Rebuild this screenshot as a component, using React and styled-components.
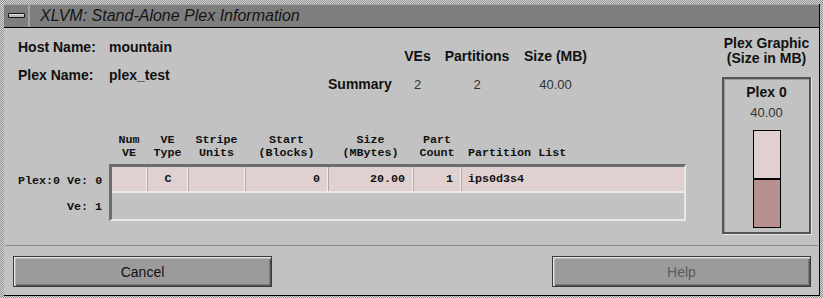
import React from "react";
import styled, { createGlobalStyle } from "styled-components";

const GlobalStyle = createGlobalStyle`
  html, body {
    margin: 0;
    padding: 0;
    background: #b4b4b4;
  }
  body {
    font-family: "Liberation Sans", Arial, sans-serif;
  }
`;

const PINK = "#e0d0d0";
const DARK_PINK = "#b89090";
const PANEL = "#c2c2c2";

// column widths of the VE table (cell + its seam)
const COLS = [36, 41, 57, 83, 85, 48, 222];

const Frame = styled.div`
  box-sizing: border-box;
  width: 823px;
  height: 298px;
  padding: 4px 3px 2px 4px;
  background: repeating-conic-gradient(#d8d8d8 0 25%, #8e8e8e 0 50%) 0 0 / 2px 2px;
`;

const Window = styled.div`
  box-sizing: border-box;
  height: 100%;
  display: flex;
  flex-direction: column;
  background: ${PANEL};
  border-right: 1px solid #000;
  border-bottom: 1px solid #000;
`;

const TitleBar = styled.div`
  height: 23px;
  flex: none;
  display: flex;
  align-items: center;
  background: #7e7e7e;
  border-bottom: 1px solid #000;
  box-shadow: inset 0 1px 0 #a6a6a6;
`;

const MenuButton = styled.div`
  width: 24px;
  height: 100%;
  display: flex;
  align-items: center;
  justify-content: center;
  border-right: 2px solid #a4a4a4;
`;

const MenuBar = styled.div`
  width: 15px;
  height: 3px;
  border: 1px solid #111;
  border-radius: 1px;
  background: #b8b8b8;
  box-shadow: inset 0 1px 0 #e0e0e0;
`;

const Title = styled.div`
  margin-left: 10px;
  font-size: 16px;
  font-style: italic;
  color: #151515;
  white-space: nowrap;
`;

const Upper = styled.div`
  box-sizing: border-box;
  height: 217px;
  flex: none;
  display: flex;
  padding: 5px 8px 0 14px;
`;

const MainColumn = styled.div`
  flex: 1;
`;

const InfoRow = styled.div`
  display: flex;
`;

const InfoGrid = styled.div`
  width: 310px;
  display: grid;
  grid-template-columns: 91px auto;
  grid-auto-rows: 28px;
  align-items: center;
  font-size: 14px;
  font-weight: bold;
  color: #111;
`;

const SummaryGrid = styled.div`
  margin-top: 9px;
  display: grid;
  grid-template-columns: 64px 25px 68px 63px;
  column-gap: 13px;
  grid-auto-rows: 28px;
  align-items: center;
  justify-items: center;
`;

const SumHead = styled.div`
  font-size: 14px;
  font-weight: bold;
  color: #111;
  white-space: nowrap;
  justify-self: ${(p) => (p.$left ? "start" : "center")};
`;

const SumValue = styled.div`
  font-size: 13px;
  color: #333;
`;

const TableArea = styled.div`
  margin-top: 36px;
  display: grid;
  grid-template-columns: 91px auto;
  row-gap: 4px;
  font-family: "Liberation Mono", "Courier New", monospace;
  font-size: 11.7px;
  font-weight: bold;
  color: #111;
`;

const HeaderRow = styled.div`
  grid-column: 2;
  display: flex;
  padding-left: 3px;
  line-height: 13px;
`;

const HeadCell = styled.div`
  box-sizing: border-box;
  width: ${(p) => p.$w}px;
  padding: ${(p) => (p.$left ? "0 0 0 6px" : "0 2px 0 0")};
  text-align: ${(p) => (p.$left ? "left" : "center")};
  white-space: pre;
`;

const RowLabels = styled.div`
  padding-top: 4px;
  display: flex;
  flex-direction: column;
`;

const RowLabel = styled.div`
  height: 26px;
  line-height: 26px;
  padding-right: 7px;
  text-align: right;
  white-space: pre;
`;

const TableFrame = styled.div`
  width: 577px;
  box-sizing: border-box;
  border-top: 3px solid #6c6c6c;
  border-left: 3px solid #6c6c6c;
  border-right: 2px solid #e8e8e8;
  border-bottom: 2px solid #e8e8e8;
`;

const TableRow = styled.div`
  display: flex;
  height: ${(p) => (p.$filled ? 24 : 26)}px;
  border-bottom: ${(p) => (p.$filled ? "2px solid #e8e8e8" : "none")};
`;

const Cell = styled.div`
  box-sizing: border-box;
  width: ${(p) => p.$w}px;
  display: flex;
  align-items: center;
  justify-content: ${(p) => p.$align || "flex-start"};
  padding: 0 ${(p) => (p.$align === "flex-end" ? 8 : 6)}px 0 6px;
  background: ${PINK};
  border-right: ${(p) => (p.$last ? "none" : "1px solid #a9a9a9")};
  box-shadow: ${(p) => (p.$last ? "none" : "inset -1px 0 0 #eeeeee")};
`;

const SideColumn = styled.div`
  width: 89px;
  flex: none;
  padding-top: 3px;
`;

const SideTitle = styled.div`
  font-size: 14px;
  font-weight: bold;
  line-height: 15px;
  text-align: center;
  color: #111;
  white-space: nowrap;
`;

const PlexBox = styled.div`
  box-sizing: border-box;
  margin-top: 11px;
  height: 157px;
  border: 2px solid #555;
  box-shadow: 1px 1px 0 #e8e8e8, inset 1px 1px 0 #9a9a9a;
  display: flex;
  flex-direction: column;
  align-items: center;
  padding-top: 5px;
`;

const PlexName = styled.div`
  font-size: 14px;
  font-weight: bold;
  line-height: 16px;
  color: #111;
`;

const PlexSize = styled.div`
  margin-top: 5px;
  font-size: 13px;
  line-height: 16px;
  color: #333;
`;

const Bar = styled.div`
  box-sizing: border-box;
  margin-top: 9px;
  width: 28px;
  height: 98px;
  border: 1px solid #000;
  display: flex;
  flex-direction: column;
`;

const BarPart = styled.div`
  flex: 1;
  background: ${(p) => p.$color};
  border-top: ${(p) => (p.$divider ? "2px solid #000" : "none")};
`;

const Divider = styled.div`
  height: 0;
  border-top: 1px solid #8a8a8a;
  margin: 0 1px;
`;

const ButtonRow = styled.div`
  display: flex;
  justify-content: space-between;
  padding: 10px 8px 0 9px;
`;

const Button = styled.button`
  box-sizing: border-box;
  width: 259px;
  height: 31px;
  background: #9b9b9b;
  border: 1px solid #3a3a3a;
  box-shadow: inset 1px 1px 0 #e6e6e6, inset 2px 2px 0 #b8b8b8,
    inset -1px -1px 0 #555, inset -2px -2px 0 #7a7a7a;
  font-family: "Liberation Sans", Arial, sans-serif;
  font-size: 14px;
  color: ${(p) => (p.disabled ? "#5c5c5c" : "#111")};
  padding: 0;
`;

const headers = ["Num\nVE", "VE\nType", "Stripe\nUnits", "Start\n(Blocks)", "Size\n(MBytes)", "Part\nCount", "\nPartition List"];

export default function App() {
  return (
    <>
      <GlobalStyle />
      <Frame>
        <Window>
          <TitleBar>
            <MenuButton>
              <MenuBar />
            </MenuButton>
            <Title>XLVM: Stand-Alone Plex Information</Title>
          </TitleBar>

          <Upper>
            <MainColumn>
              <InfoRow>
                <InfoGrid>
                  <div>Host Name:</div>
                  <div>mountain</div>
                  <div>Plex Name:</div>
                  <div>plex_test</div>
                </InfoGrid>
                <SummaryGrid>
                  <div />
                  <SumHead>VEs</SumHead>
                  <SumHead>Partitions</SumHead>
                  <SumHead>Size (MB)</SumHead>
                  <SumHead $left>Summary</SumHead>
                  <SumValue>2</SumValue>
                  <SumValue>2</SumValue>
                  <SumValue>40.00</SumValue>
                </SummaryGrid>
              </InfoRow>

              <TableArea>
                <HeaderRow>
                  {headers.map((h, i) => (
                    <HeadCell key={i} $w={COLS[i]} $left={i === COLS.length - 1}>
                      {h}
                    </HeadCell>
                  ))}
                </HeaderRow>
                <RowLabels>
                  <RowLabel>Plex:0 Ve: 0</RowLabel>
                  <RowLabel>Ve: 1</RowLabel>
                </RowLabels>
                <TableFrame>
                  <TableRow $filled>
                    <Cell $w={COLS[0]} />
                    <Cell $w={COLS[1]} $align="center">C</Cell>
                    <Cell $w={COLS[2]} />
                    <Cell $w={COLS[3]} $align="flex-end">0</Cell>
                    <Cell $w={COLS[4]} $align="flex-end">20.00</Cell>
                    <Cell $w={COLS[5]} $align="flex-end">1</Cell>
                    <Cell $w={COLS[6]} $last>ips0d3s4</Cell>
                  </TableRow>
                  <TableRow />
                </TableFrame>
              </TableArea>
            </MainColumn>

            <SideColumn>
              <SideTitle>
                Plex Graphic
                <br />
                (Size in MB)
              </SideTitle>
              <PlexBox>
                <PlexName>Plex 0</PlexName>
                <PlexSize>40.00</PlexSize>
                <Bar>
                  <BarPart $color={PINK} />
                  <BarPart $color={DARK_PINK} $divider />
                </Bar>
              </PlexBox>
            </SideColumn>
          </Upper>

          <Divider />

          <ButtonRow>
            <Button>Cancel</Button>
            <Button disabled>Help</Button>
          </ButtonRow>
        </Window>
      </Frame>
    </>
  );
}
